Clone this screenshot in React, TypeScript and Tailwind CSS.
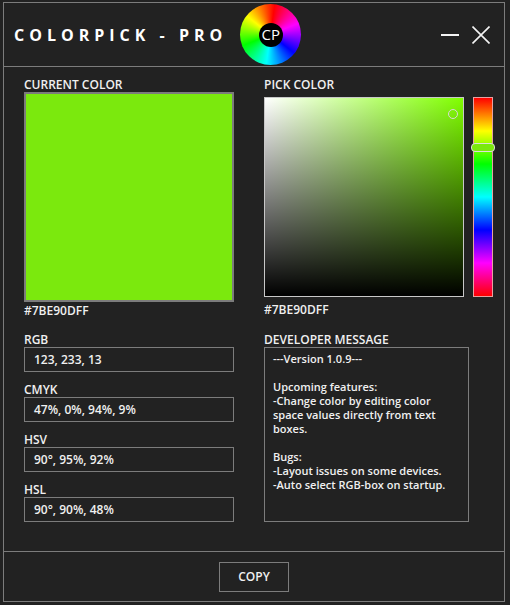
import React from 'react';

const fields = [
  { label: 'RGB', value: '123, 233, 13' },
  { label: 'CMYK', value: '47%, 0%, 94%, 9%' },
  { label: 'HSV', value: '90°, 95%, 92%' },
  { label: 'HSL', value: '90°, 90%, 48%' },
];

const font = "font-['Open_Sans','Noto_Sans',sans-serif]";

export default function App() {
  return (
    <div className={`h-[605px] w-[510px] bg-[#222222] pt-[2px] pl-[3px] pr-[5px] pb-[3px] text-[#f0f0f0] ${font}`}>
      <div className="flex h-full flex-col border border-[#7c7c7c]">
        {/* Title bar */}
        <div className="relative flex h-[64px] shrink-0 items-center border-b border-[#7c7c7c] pl-[10px]">
          <span className="text-[16px] font-bold tracking-[5px] whitespace-pre text-white">COLORPICK - PRO</span>
          <div className="ml-[13px] flex h-[61px] w-[61px] items-center justify-center rounded-full bg-[conic-gradient(from_8deg,#ff0000,#ff00ff_60deg,#0000ff_120deg,#00ffff_180deg,#00ff00_240deg,#ffff00_300deg,#ff0000)]">
            <div className="flex h-[24px] w-[24px] items-center justify-center rounded-full bg-black text-[15px] text-white">CP</div>
          </div>
          <div className="ml-auto mr-[14px] flex items-center gap-[13px]">
            <svg width="18" height="18" viewBox="0 0 18 18">
              <path d="M0 9H18" stroke="#f4f4f4" strokeWidth="2" />
            </svg>
            <svg width="18" height="18" viewBox="0 0 18 18">
              <path d="M0.5 0.5L17.5 17.5M17.5 0.5L0.5 17.5" stroke="#f4f4f4" strokeWidth="1.6" />
            </svg>
          </div>
        </div>

        {/* Body */}
        <div className="flex flex-1 pl-[20px] pt-[9px]">
          <div className="flex w-[210px] flex-col">
            <div className="h-[16px] text-[12px] leading-[18px] font-semibold">CURRENT COLOR</div>
            <div className="h-[210px] w-[210px] border-2 border-[#7c7c7c] bg-[#7be90d]" />
            <div className="h-[16px] pt-[1px] text-[12px] leading-[16px] font-semibold">#7BE90DFF</div>
            <div className="mt-[13px] flex flex-col gap-[9px]">
              {fields.map((field) => (
                <div key={field.label}>
                  <div className="h-[16px] text-[12px] leading-[18px] font-semibold">{field.label}</div>
                  <div className="flex h-[25px] items-center border border-[#7c7c7c] pl-[9px] text-[12px] font-semibold">
                    {field.value}
                  </div>
                </div>
              ))}
            </div>
          </div>

          <div className="ml-[30px] flex w-[229px] flex-col">
            <div className="h-[21px] text-[12px] leading-[18px] font-semibold">PICK COLOR</div>
            <div className="flex gap-[9px]">
              <div className="relative h-[200px] w-[200px] border border-[#c8c8c8] bg-[linear-gradient(to_bottom,transparent,#000000),linear-gradient(to_right,#ffffff,#80ff00)]">
                <div className="absolute top-[11px] left-[183px] h-[10px] w-[10px] rounded-full border-[1.5px] border-[#d8d8d8]" />
              </div>
              <div className="relative h-[200px] w-[20px] border border-[#e8a0a0] bg-[linear-gradient(to_bottom,#ff0000,#ffff00,#00ff00,#00ffff,#0000ff,#ff00ff,#ff0000)]">
                <div className="absolute top-[45px] -left-[3px] h-[9px] w-[24px] rounded-[4px] border border-[#dddddd] bg-[#7be90d]" />
              </div>
            </div>
            <div className="h-[21px] pt-[5px] text-[12px] leading-[16px] font-semibold">#7BE90DFF</div>
            <div className="mt-[13px] h-[16px] text-[12px] leading-[18px] font-semibold">DEVELOPER MESSAGE</div>
            <div className="h-[175px] w-[205px] border border-[#7c7c7c] px-[8px] pt-[4px] text-[11px] leading-[14px] font-semibold whitespace-pre-line">
              {`---Version 1.0.9---

Upcoming features:
-Change color by editing color
space values directly from text
boxes.

Bugs:
-Layout issues on some devices.
-Auto select RGB-box on startup.`}
            </div>
          </div>
        </div>

        {/* Footer */}
        <div className="flex h-[50px] shrink-0 items-center justify-center border-t border-[#7c7c7c]">
          <button className="h-[30px] w-[70px] border border-[#7c7c7c] text-[12px] font-semibold">COPY</button>
        </div>
      </div>
    </div>
  );
}
